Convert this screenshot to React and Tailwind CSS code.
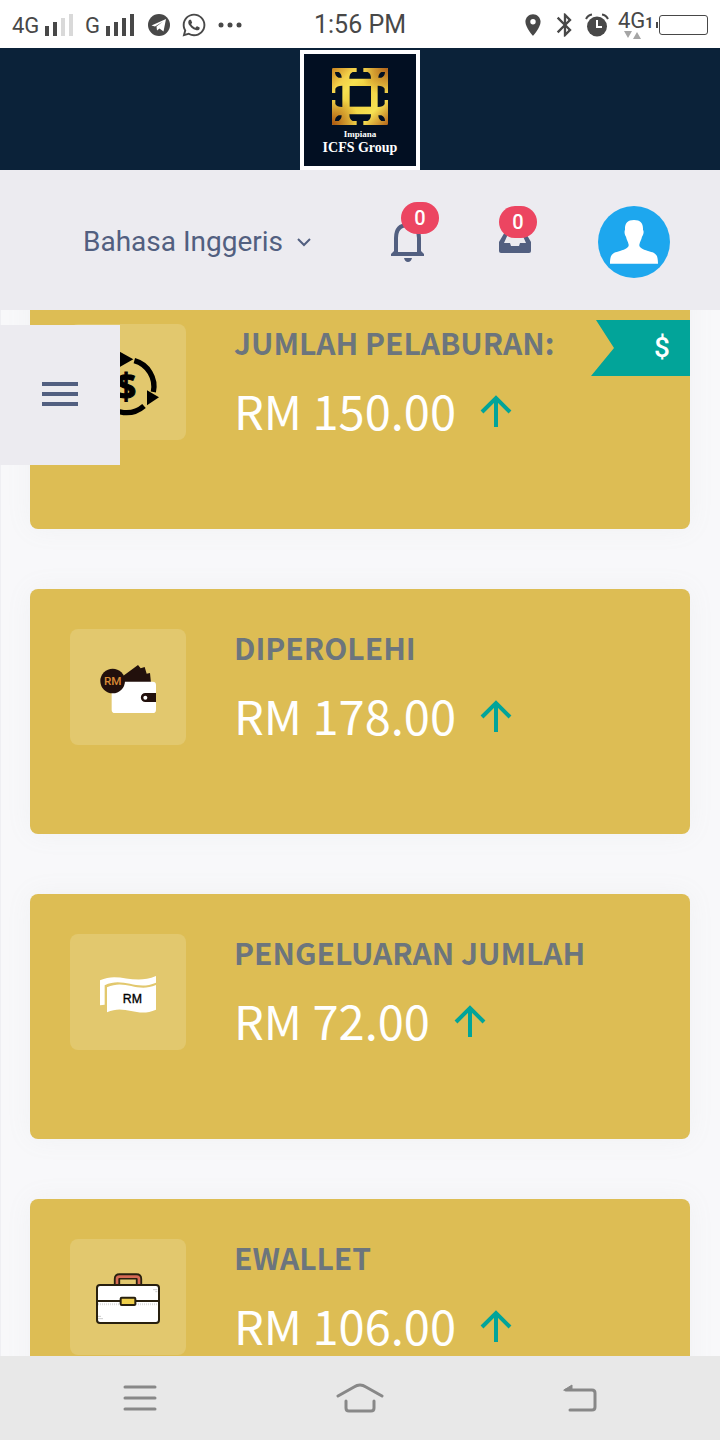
import React, { useState } from 'react';
import { FaWhatsapp } from 'react-icons/fa';
import { MdBluetooth, MdLocationOn } from 'react-icons/md';

const languages = ['Bahasa Inggeris', 'Bahasa Melayu'];

const stats = [
  { title: 'JUMLAH PELABURAN:', value: 'RM 150.00', icon: InvestIcon, ribbon: '$' },
  { title: 'DIPEROLEHI', value: 'RM 178.00', icon: WalletIcon },
  { title: 'PENGELUARAN JUMLAH', value: 'RM 72.00', icon: CashIcon },
  { title: 'EWALLET', value: 'RM 106.00', icon: BriefcaseIcon },
];

function InvestIcon() {
  return (
    <svg viewBox="0 0 348 348" className="size-full" aria-hidden="true">
      <g fill="none" stroke="#000" strokeWidth="16">
        <path d="M193 110A80 80 0 0 1 250 204" />
        <path d="M222 246A80 80 0 0 1 105 234" />
        <path d="M92 200A80 80 0 0 1 146 113" />
      </g>
      <path d="M140 78l50 28-50 28zM231 199l36 21-36 24z" />
      <text x="168" y="225" textAnchor="middle" fontSize="108" fontWeight="700" fontFamily="'Open Sans', sans-serif" stroke="#000" strokeWidth="3">$</text>
    </svg>
  );
}

function WalletIcon() {
  return (
    <svg viewBox="0 0 348 348" className="size-full" aria-hidden="true">
      <path d="M158 142l46-34 8 10 12-4 6 20 10-2 3 30h-85z" fill="#22100c" />
      <rect x="125" y="158" width="133" height="94" rx="10" fill="#fff" />
      <circle cx="128" cy="156" r="37" fill="#22100c" />
      <text x="128" y="169" textAnchor="middle" fontSize="35" fontWeight="500" fill="#d98a35" fontFamily="'Roboto', sans-serif">RM</text>
      <path d="M258 192v27h-32a13.500 13.500 0 0 1 0-27z" fill="#22100c" />
      <circle cx="226" cy="206" r="6" fill="#fff" />
    </svg>
  );
}

function CashIcon() {
  return (
    <svg viewBox="0 0 348 348" className="size-full" aria-hidden="true">
      <path d="M90 139c56-27 100 16 168-13v20c-60 26-98-19-154 8v58l-14 2z" fill="#fff" />
      <path d="M111 160c56-26 88 18 147-7v74c-58 26-92-18-147 8z" fill="#fff" />
      <text x="187" y="207" textAnchor="middle" fontSize="37" fontFamily="'Liberation Sans', sans-serif" stroke="#000">RM</text>
    </svg>
  );
}

function BriefcaseIcon() {
  return (
    <svg viewBox="0 0 348 348" className="size-full" aria-hidden="true">
      <path d="M141 142v-22q0-8 8-8h50q8 0 8 8v22" fill="none" stroke="#28200f" strokeWidth="19" />
      <path d="M141 142v-22q0-7 7-7h52q7 0 7 7v22" fill="none" stroke="#d56a55" strokeWidth="8" />
      <rect x="81" y="138" width="186" height="114" rx="9" fill="#fff" stroke="#28200f" strokeWidth="6" />
      <path d="M81 186h186" stroke="#28200f" strokeWidth="6" />
      <path d="M84 196h180" stroke="#ddd" strokeWidth="6" strokeDasharray="3 3" />
      <path d="M249 152h13M256 158h6M84 232h9M84 239h15" stroke="#ccc" strokeWidth="3" />
      <rect x="152" y="176" width="44" height="22" rx="3" fill="#efcf4b" stroke="#28200f" strokeWidth="6" />
    </svg>
  );
}

function SignalBars({ level }) {
  return (
    <svg viewBox="0 0 28 22" className="h-[22px] w-7" aria-hidden="true">
      {[10, 14, 18, 22].map((h, i) => (
        <rect key={h} x={i * 8} y={22 - h} width="4" height={h} fill={i < level ? '#484848' : '#d9d9d9'} />
      ))}
    </svg>
  );
}

function StatusBar() {
  return (
    <div className="grid h-12 shrink-0 grid-cols-[1fr_auto_1fr] items-center bg-white px-3 pt-[2px] text-[#484848]">
      <div className="flex items-center">
        <span className="w-[33px] text-[22px]">4G</span>
        <SignalBars level={2} />
        <span className="ml-3 w-[21px] text-[22px]">G</span>
        <SignalBars level={4} />
        <svg viewBox="0 0 22 22" className="ml-[14px] size-[22px]" aria-hidden="true">
          <circle cx="11" cy="11" r="11" fill="#484848" />
          <path d="M3.500 11.500L18 5l-2.500 12.500-4-3-2.500 2-.5-4L15 7.500 7 12.500z" fill="#fff" />
        </svg>
        <FaWhatsapp className="ml-[11px] size-[26px]" />
        <svg viewBox="0 0 24 6" className="ml-[11px] h-[6px] w-6" fill="currentColor" aria-hidden="true">
          <circle cx="3" cy="3" r="2.500" />
          <circle cx="12" cy="3" r="2.500" />
          <circle cx="21" cy="3" r="2.500" />
        </svg>
      </div>
      <time className="text-[25px]">1:56 PM</time>
      <div className="flex items-center justify-end">
        <MdLocationOn className="size-[26px]" />
        <MdBluetooth className="ml-[5px] size-7" />
        <svg viewBox="0 0 24 24" className="ml-[6px] size-6" aria-hidden="true">
          <circle cx="12" cy="13.500" r="10" fill="#484848" />
          <path d="M1 6Q3 2 7 1.500M23 6Q21 2 17 1.500" fill="none" stroke="#484848" strokeWidth="2" />
          <path d="M12 7v7h5" fill="none" stroke="#fff" strokeWidth="2" />
        </svg>
        <div className="ml-[9px] flex w-[38px] flex-col">
          <div className="flex h-5 items-center leading-5">
            <span className="text-[22px]">4G</span>
            <span className="pt-1 text-[14px] font-bold">1</span>
          </div>
          <svg viewBox="0 0 18 8" className="ml-[6px] h-2 w-[18px]" fill="#a5a5a5" aria-hidden="true">
            <path d="M0 0h8l-4 7zM9 8h8l-4-7z" />
          </svg>
        </div>
        <svg viewBox="0 0 52 20" className="h-5 w-[52px]" fill="none" stroke="#484848" aria-hidden="true">
          <path d="M1 7v6" strokeWidth="2" />
          <rect x="3.500" y=".5" width="48" height="19" rx="2.500" />
        </svg>
      </div>
    </div>
  );
}

function Logo() {
  return (
    <a href="#home" className="flex size-[120px] flex-col items-center border-4 border-white bg-[#020f22] pt-[14px] text-white">
      <svg viewBox="0 0 168 171" className="h-[57px] w-14" aria-hidden="true">
        <defs>
          <linearGradient id="gold" x1="0" y1="0" x2="1" y2="1">
            <stop offset="0" stopColor="#c98320" />
            <stop offset=".2" stopColor="#f3d049" />
            <stop offset=".32" stopColor="#f7e050" />
            <stop offset=".45" stopColor="#f0cf40" />
            <stop offset=".75" stopColor="#f7e252" />
            <stop offset="1" stopColor="#b5641a" />
          </linearGradient>
          <radialGradient id="goldTop" cx="1" cy="0" r=".5">
            <stop offset="0" stopColor="#b0601a" />
            <stop offset="1" stopColor="#b0601a" stopOpacity="0" />
          </radialGradient>
          <radialGradient id="goldBottom" cx="0" cy="1" r=".5">
            <stop offset="0" stopColor="#a9540f" />
            <stop offset="1" stopColor="#a9540f" stopOpacity="0" />
          </radialGradient>
        </defs>
        <rect width="168" height="171" rx="4" fill="url(#gold)" />
        <rect width="168" height="171" rx="4" fill="url(#goldTop)" />
        <rect width="168" height="171" rx="4" fill="url(#goldBottom)" />
        <g fill="#020f22">
          <path d="M53 54h64v62H53z" />
          <path d="M74 0h20v12h13q10 4 10 20H52q0-16 10-20h12z" />
          <path d="M74 171h20v-12h13q10-4 10-20H52q0 16 10 20h12z" />
          <path d="M0 75h10V62q4-9 21-9v64q-17 0-21-9V96H0z" />
          <path d="M168 75h-10V62q-4-9-21-9v64q17 0 21-9V96h10z" />
          <path d="M9 12h11q9 6 9 17H20Q9 24 9 12z" />
          <path d="M159 12h-11q-9 6-9 17h9q11-5 11-17z" />
          <path d="M9 159h11q9-6 9-17H20q-11 5-11 17z" />
          <path d="M159 159h-11q-9-6-9-17h9q11 5 11 17z" />
        </g>
      </svg>
      <span className="mt-1 font-['Liberation_Serif',serif] text-[9px] leading-[10px] font-bold">Impiana</span>
      <span className="font-['Liberation_Serif',serif] text-[14px] leading-[18px] font-bold">ICFS Group</span>
    </a>
  );
}

function BellIcon() {
  return (
    <svg viewBox="0 0 36 40" className="h-10 w-9" aria-hidden="true">
      <path d="M6 30V16Q6 3 18 3q11 0 11 13v14" fill="none" stroke="currentColor" strokeWidth="4" />
      <path d="M1 34v-2l4-4v2h25v-2l4 4v2zM14 36h8q-1 4-4 4t-4-4z" fill="currentColor" />
    </svg>
  );
}

function InboxIcon() {
  return (
    <svg viewBox="0 0 32 24" className="h-6 w-8" aria-hidden="true">
      <path d="M7 0h18l7 12v9q0 2-2 2H2q-2 0-2-2v-9z" fill="currentColor" />
      <path d="M9 4h14l4 9h-6l-1 3h-8l-1-3H5z" fill="#ecebf0" />
    </svg>
  );
}

function Badge({ count, className }) {
  return (
    <span className={`absolute flex h-8 w-[38px] items-center justify-center rounded-full bg-[#ec4561] text-[20px] font-medium text-white ${className}`}>
      {count}
    </span>
  );
}

function Toolbar() {
  const [language, setLanguage] = useState(languages[0]);

  return (
    <div className="flex h-[140px] shrink-0 items-center bg-[#ecebf0] pt-1 pr-[50px] pl-[83px] text-[#525f80]">
      <label className="flex items-center">
        <select
          aria-label="Bahasa"
          value={language}
          onChange={(e) => setLanguage(e.target.value)}
          className="appearance-none bg-transparent text-[28px] [field-sizing:content] focus:outline-none"
        >
          {languages.map((l) => (
            <option key={l}>{l}</option>
          ))}
        </select>
        <svg viewBox="0 0 14 9" className="ml-[14px] h-[9px] w-[14px]" fill="none" stroke="currentColor" strokeWidth="2" aria-hidden="true">
          <path d="M1 1l6 6 6-6" />
        </svg>
      </label>

      <div className="ml-auto flex items-center">
        <button type="button" aria-label="Notifikasi" className="relative">
          <BellIcon />
          <Badge count={0} className="bottom-7 left-[11px]" />
        </button>
        <button type="button" aria-label="Peti masuk" className="relative ml-[73px]">
          <InboxIcon />
          <Badge count={0} className="bottom-4 left-0" />
        </button>
        <button type="button" aria-label="Profil" className="ml-[67px] size-[72px] overflow-hidden rounded-full bg-[#1da7ee]">
          <svg viewBox="0 0 216 216" className="size-full" fill="#fff" aria-hidden="true">
            <path d="M108 42c20 0 28 10 27 30 4 4 1 16-3 20-2 10-6 14-8 24-1 8 8 14 26 19 22 6 30 8 30 38H36c0-30 8-32 30-38 18-5 27-11 26-19-2-10-6-14-8-24-4-4-6-16-3-20-1-20 7-30 27-30z" />
          </svg>
        </button>
      </div>
    </div>
  );
}

function StatCard({ title, value, icon: Icon, ribbon }) {
  return (
    <section className="relative flex min-h-[245px] items-start gap-12 rounded-lg bg-[#ddbd54] p-10 shadow-[0_0_26px_rgba(154,161,171,0.08)]">
      <div className="size-[116px] shrink-0 rounded-lg bg-[#e2c86e]">
        <Icon />
      </div>
      <div className="font-['Noto_Sans_CJK_SC',sans-serif]">
        <h2 className="text-[30px] leading-9 font-bold text-[#6c757d]">{title}</h2>
        <p className="mt-6 flex items-center gap-6 text-[47px] leading-[52px] text-white">
          {value}
          <svg viewBox="0 0 32 32" className="mt-[2px] size-8" fill="none" stroke="#02a499" strokeWidth="4" aria-hidden="true">
            <path d="M16 32V4M2 17L16 3l14 14" />
          </svg>
        </p>
      </div>
      {ribbon && (
        <span className="absolute top-9 right-0 flex h-14 w-[99px] items-center justify-end bg-[#02a499] pr-5 text-[28px] font-medium text-white [clip-path:polygon(5px_0,100%_0,100%_100%,0_100%,23px_50%)]">
          {ribbon}
        </span>
      )}
    </section>
  );
}

function NavBar() {
  return (
    <nav className="flex h-[84px] shrink-0 bg-[#e8e8e8] px-[30px] text-[#888]">
      <button type="button" aria-label="Menu" className="flex flex-1 items-center justify-center">
        <svg viewBox="0 0 34 26" className="h-[26px] w-[34px]" fill="none" stroke="currentColor" strokeWidth="3" strokeLinecap="round" aria-hidden="true">
          <path d="M2 2h30M2 13h30M2 24h30" />
        </svg>
      </button>
      <button type="button" aria-label="Utama" className="flex flex-1 items-center justify-center">
        <svg viewBox="0 0 48 30" className="h-[30px] w-12" fill="none" stroke="currentColor" strokeWidth="3" strokeLinecap="round" aria-hidden="true">
          <path d="M2 13L18 4q6-4 12 0l16 9M10 18v7q0 3 3 3h22q3 0 3-3v-7" />
        </svg>
      </button>
      <button type="button" aria-label="Kembali" className="flex flex-1 items-center justify-center">
        <svg viewBox="0 0 34 28" className="h-7 w-[34px]" fill="none" stroke="currentColor" strokeWidth="3" strokeLinecap="round" aria-hidden="true">
          <path d="M3 6h26q3 0 3 3v14q0 3-3 3H7" />
          <path d="M1 6l8-5v5z" fill="currentColor" strokeWidth="1" />
        </svg>
      </button>
    </nav>
  );
}

export default function App() {
  return (
    <div className="flex h-screen flex-col overflow-hidden bg-[#f8f8fa] font-['Roboto',sans-serif]">
      <StatusBar />

      <header className="flex shrink-0 justify-center bg-[#0b2239] pt-[2px]">
        <Logo />
      </header>
      <Toolbar />

      <div className="relative min-h-0 flex-1">
        <main className="h-full overflow-y-auto border-l border-[#efeff3] [scrollbar-width:none]">
          <div className="-mt-[26px] flex flex-col gap-[60px] pr-[30px] pb-[30px] pl-[29px]">
            {stats.map((s) => (
              <StatCard key={s.title} {...s} />
            ))}
          </div>
        </main>

        {/* Sidebar toggle floats over the cards */}
        <button
          type="button"
          aria-label="Buka menu"
          className="absolute top-[15px] left-0 flex h-[140px] w-[120px] flex-col items-center justify-center gap-[6px] bg-[#ecebf0] pb-[2px]"
        >
          <span className="h-1 w-9 bg-[#525f80]" />
          <span className="h-1 w-9 bg-[#525f80]" />
          <span className="h-1 w-9 bg-[#525f80]" />
        </button>
      </div>

      <NavBar />
    </div>
  );
}
